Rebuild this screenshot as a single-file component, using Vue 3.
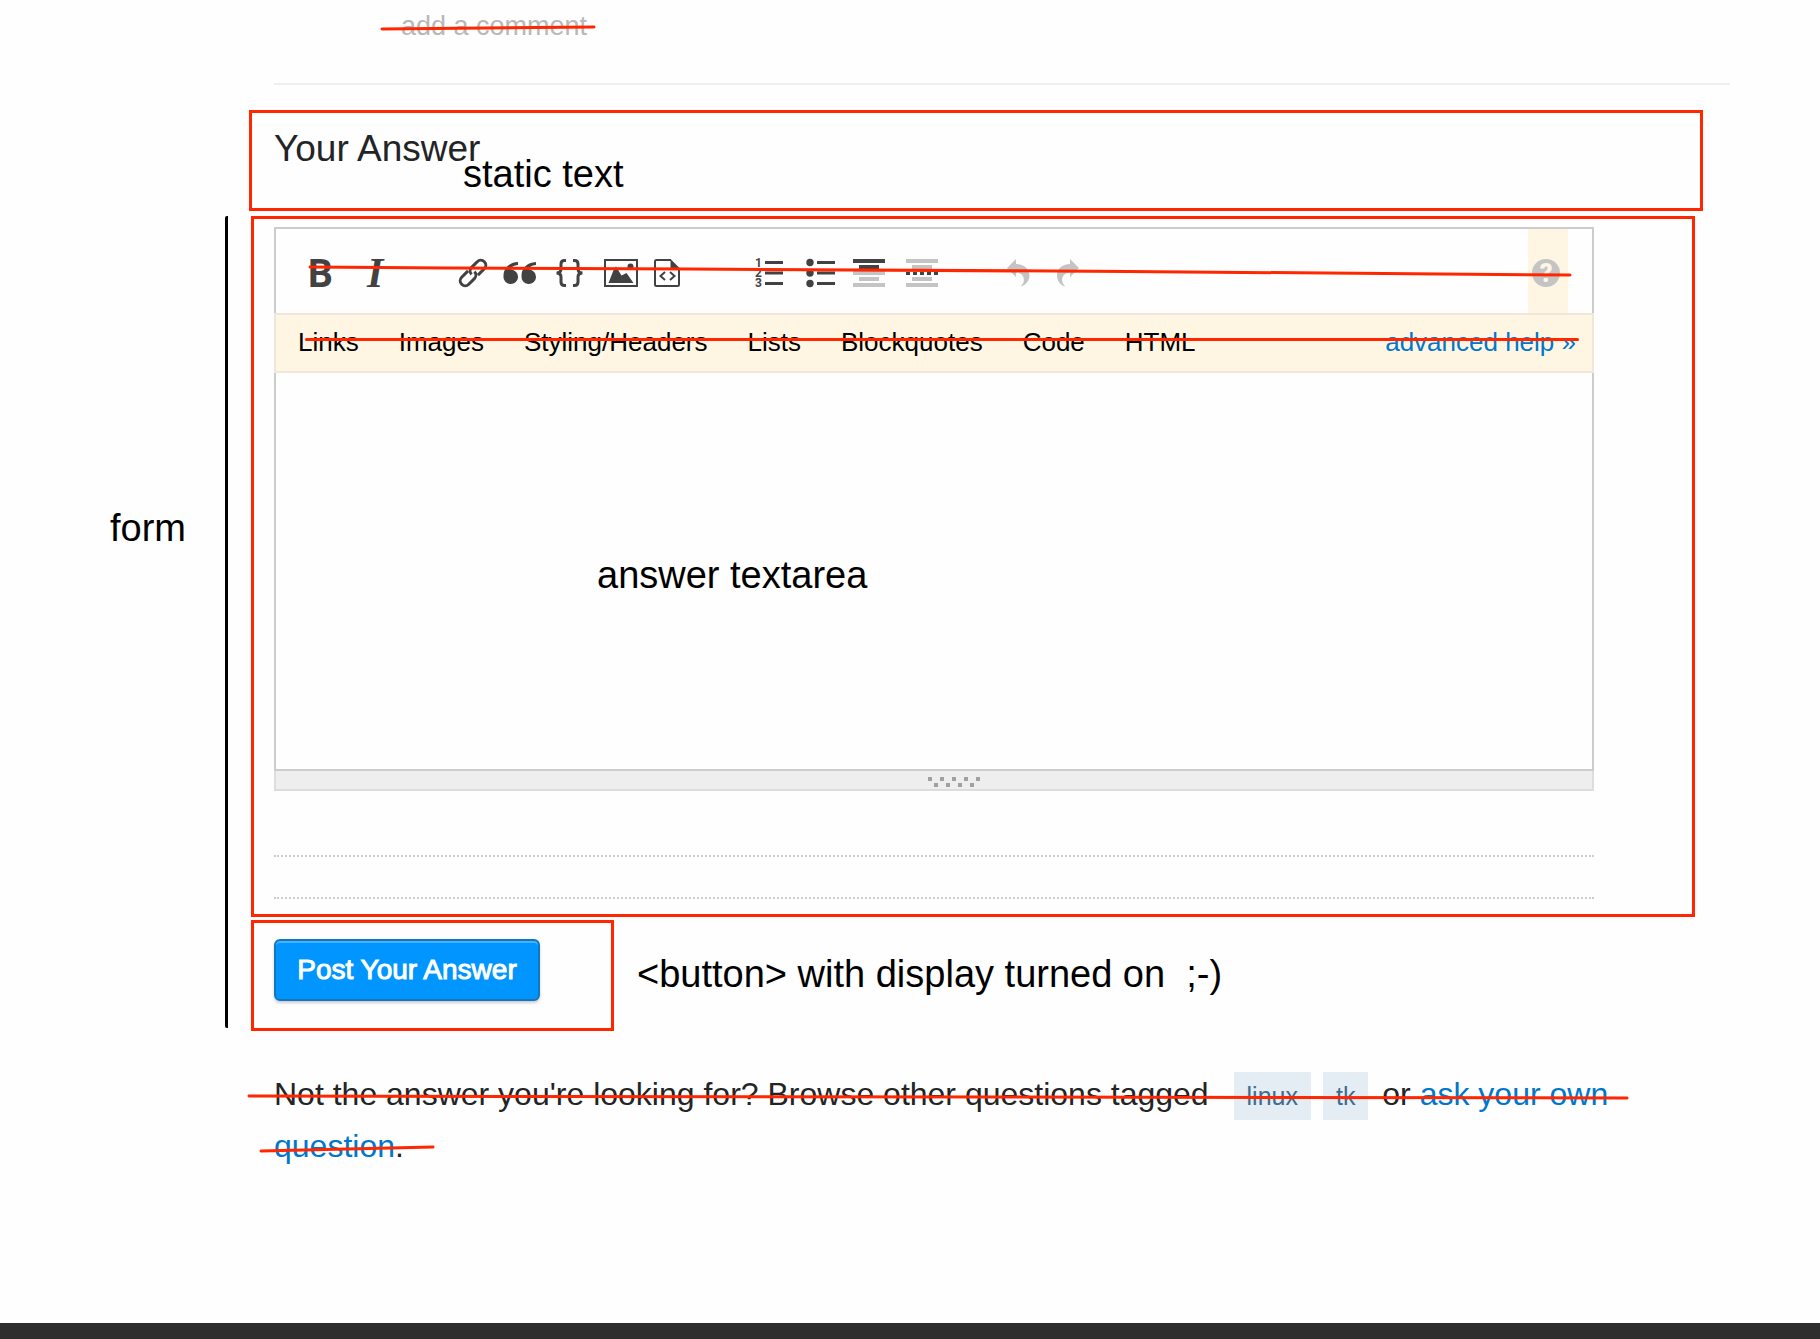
<script setup>
import { ref } from 'vue'

const answer = ref('')
const helpTopics = ['Links', 'Images', 'Styling/Headers', 'Lists', 'Blockquotes', 'Code', 'HTML']
const tags = ['linux', 'tk']
const grip = [0, 1, 2, 3, 4, 5, 6, 7, 8]
</script>

<template>
  <div class="page">
    <main>
      <div class="comment-row">
        <a href="#" class="add-comment">add a comment</a>
        <svg class="mark mark-comment" viewBox="0 0 216 8" preserveAspectRatio="none" aria-hidden="true">
          <path d="M2 5L214 3" />
        </svg>
      </div>

      <section class="heading-box">
        <h2>Your Answer</h2>
        <span class="note note-static">static text</span>
      </section>

      <div class="form-row">
        <div class="form-label note">form</div>
        <form @submit.prevent>
          <div class="editor-box">
            <div class="editor">
              <div class="toolbar">
                <button type="button" aria-label="Bold">
                  <svg viewBox="0 0 40 28"><text x="8" y="28" class="glyph-b">B</text></svg>
                </button>
                <button type="button" aria-label="Italic">
                  <svg viewBox="0 0 40 28"><text x="17" y="28" class="glyph-i">I</text></svg>
                </button>
                <span class="spacer"></span>
                <button type="button" aria-label="Link">
                  <svg viewBox="0 0 40 28">
                    <g transform="translate(23 14) rotate(-45)" class="line">
                      <path d="M-2 -5H-11a5 5 0 0 0 0 10H-3a5 5 0 0 0 5 -5" />
                      <path d="M2 5H11a5 5 0 0 0 0 -10H3a5 5 0 0 0 -5 5" />
                    </g>
                  </svg>
                </button>
                <button type="button" aria-label="Blockquote">
                  <svg viewBox="0 0 40 28">
                    <path d="M3.500 17C3.500 9 9 3.500 18 3V6C13.500 6.500 11.500 8 11 10.500A7.300 7.300 0 1 1 3.500 17Z" />
                    <path d="M21.500 17C21.500 9 27 3.500 36 3V6C31.500 6.500 29.500 8 29 10.500A7.300 7.300 0 1 1 21.500 17Z" />
                  </svg>
                </button>
                <button type="button" aria-label="Code">
                  <svg viewBox="0 0 40 28">
                    <path class="line" d="M16 1.500h-1.500c-2.500 0-3.500 1.200-3.500 3.500v5c0 2.500-1 4-4.500 4 3.500 0 4.500 1.500 4.500 4v5c0 2.300 1 3.500 3.500 3.500H16M23 1.500h1.500c2.500 0 3.500 1.200 3.500 3.500v5c0 2.500 1 4 4.500 4-3.500 0-4.500 1.500-4.500 4v5c0 2.300-1 3.500-3.500 3.500H23" />
                  </svg>
                </button>
                <button type="button" aria-label="Image">
                  <svg viewBox="0 0 40 28">
                    <rect class="thin" x="5" y="1" width="32" height="26" />
                    <path d="M8.500 24L14 10L16 7.500L21.500 16.500L26.500 14L33.500 24Z" />
                    <circle cx="30.500" cy="7.500" r="3" />
                  </svg>
                </button>
                <button type="button" aria-label="Snippet">
                  <svg viewBox="0 0 40 28">
                    <path class="thin" d="M21 1H6.500Q5 1 5 2.500V25.500Q5 27 6.500 27H27.500Q29 27 29 25.500V9" />
                    <path d="M20.500 0L30 9.500H20.500Z" />
                    <path class="thin" d="M15 13L10.500 17L15 21M20 13L24.500 17L20 21" />
                  </svg>
                </button>
                <span class="spacer"></span>
                <button type="button" aria-label="Numbered list">
                  <svg viewBox="0 0 40 28">
                    <text x="5" y="8" class="digit">1</text>
                    <text x="5" y="18" class="digit">2</text>
                    <text x="5" y="28" class="digit">3</text>
                    <path d="M15 2h18v3H15zM15 12.500h18v3H15zM15 23h18v3H15z" />
                  </svg>
                </button>
                <button type="button" aria-label="Bulleted list">
                  <svg viewBox="0 0 40 28">
                    <circle cx="10" cy="3.500" r="3.700" />
                    <circle cx="10" cy="14" r="3.700" />
                    <circle cx="10" cy="24.500" r="3.700" />
                    <path d="M17 2h18v3H17zM17 12.500h18v3H17zM17 23h18v3H17z" />
                  </svg>
                </button>
                <button type="button" aria-label="Heading">
                  <svg viewBox="0 0 40 28">
                    <path d="M3 0h32v4H3zM9 6h20v4H9z" />
                    <path class="pale" d="M3 12h32v4H3zM9 18h20v4H9zM3 24h32v4H3z" />
                  </svg>
                </button>
                <button type="button" aria-label="Horizontal rule">
                  <svg viewBox="0 0 40 28">
                    <path class="pale" d="M6 0h32v4H6zM12 6h20v4H12zM12 18h20v4H12zM6 24h32v4H6z" />
                    <path d="M6 13h4v3H6zM13 13h4v3h-4zM20 13h4v3h-4zM27 13h4v3h-4zM34 13h4v3h-4z" />
                  </svg>
                </button>
                <span class="spacer"></span>
                <button type="button" aria-label="Undo">
                  <svg viewBox="0 0 40 28">
                    <path class="pale" d="M7 9L16 0V5C24 5 29.500 10 29.500 16.500C29.500 21 26 26.500 20.500 27.500C26 23 25 14 16 13.500V18Z" />
                  </svg>
                </button>
                <button type="button" aria-label="Redo">
                  <svg viewBox="0 0 40 28">
                    <path class="pale" d="M29 9L20 0V5C12 5 7 10 7 16.500C7 21 10 26.500 15.500 27.500C10 23 11 14 20 13.500V18Z" />
                  </svg>
                </button>
                <button type="button" class="help-toggle" aria-label="Help">
                  <svg viewBox="0 0 40 28">
                    <circle class="pale" cx="18" cy="14" r="14" />
                    <text x="18" y="23" class="question">?</text>
                  </svg>
                </button>
                <svg class="mark mark-toolbar" viewBox="0 0 1264 12" preserveAspectRatio="none" aria-hidden="true">
                  <path d="M2 2L140 3L380 4L820 6.500L1262 10" />
                </svg>
              </div>

              <nav class="help-bar">
                <a v-for="topic in helpTopics" :key="topic" href="#">{{ topic }}</a>
                <a href="#" class="advanced">advanced help »</a>
                <span class="help-strike"></span>
              </nav>

              <div class="answer">
                <textarea id="answer" v-model="answer"></textarea>
                <label for="answer" class="note note-answer">answer textarea</label>
              </div>

              <div class="grippie">
                <i v-for="n in grip" :key="n" :class="{ low: n % 2 === 1 }"></i>
              </div>
            </div>
            <div class="dots first"></div>
            <div class="dots"></div>
          </div>

          <div class="submit-row">
            <div class="submit-box">
              <button type="submit" class="post">Post Your Answer</button>
            </div>
            <span class="note note-button">&lt;button&gt; with display turned on&nbsp; ;-)</span>
          </div>
        </form>
      </div>

      <p class="browse">
        Not the answer you're looking for? Browse other questions tagged
        <span class="tags"><a v-for="tag in tags" :key="tag" href="#" class="tag">{{ tag }}</a></span>
        or <a href="#">ask your own question</a>.
        <svg class="mark mark-browse" viewBox="0 0 1382 6" preserveAspectRatio="none" aria-hidden="true">
          <path d="M2 2L1380 4" />
        </svg>
        <svg class="mark mark-question" viewBox="0 0 176 8" preserveAspectRatio="none" aria-hidden="true">
          <path d="M2 6L174 2" />
        </svg>
      </p>
    </main>
    <footer></footer>
  </div>
</template>

<style>
body {
  margin: 0;
  background: #fefefe;
}
</style>

<style scoped>
.page {
  font-family: "Liberation Sans", Arial, Helvetica, sans-serif;
  font-size: 26px;
  color: #222426;
  overflow: hidden;
}
a {
  color: #0077cc;
  text-decoration: none;
}
.mark {
  position: absolute;
  overflow: visible;
  fill: none;
  stroke: #ff2600;
  stroke-width: 3px;
  stroke-linecap: round;
  pointer-events: none;
}
.mark path {
  vector-effect: non-scaling-stroke;
}
.note {
  font-size: 38px;
  line-height: 44px;
  color: #000;
  white-space: pre;
}

.comment-row {
  position: relative;
  box-sizing: border-box;
  height: 85px;
  margin: 0 90px 0 274px;
  padding: 11px 0 0 127px;
  border-bottom: 2px solid #eee;
  line-height: 30px;
}
.add-comment {
  color: #b8b8b8;
  font-size: 27px;
}
.mark-comment {
  left: 106px;
  top: 24px;
  width: 216px;
  height: 8px;
}

.heading-box {
  position: relative;
  box-sizing: border-box;
  min-height: 101px;
  margin: 25px 117px 0 249px;
  padding: 16px 22px;
  border: 3px solid #ff2600;
}
h2 {
  margin: 0;
  font-size: 37px;
  line-height: 40px;
  font-weight: 400;
}
.note-static {
  position: absolute;
  left: 211px;
  top: 39px;
}

.form-row {
  display: flex;
  margin-top: 5px;
}
.form-label {
  box-sizing: border-box;
  flex: none;
  width: 225px;
  padding: 290px 0 0 110px;
}
form {
  flex: 1;
  min-width: 0;
  padding: 0 125px 0 23px;
  border-left: 3px solid #000;
  border-radius: 2px;
}
.editor-box {
  padding: 8px 98px 15px 20px;
  border: 3px solid #ff2600;
}
.toolbar {
  position: relative;
  display: flex;
  gap: 10px;
  height: 84px;
  padding: 0 24px;
  border: 2px solid #ccc;
  border-bottom: 0;
}
.toolbar button,
.spacer {
  flex: none;
  width: 40px;
}
.toolbar button {
  display: flex;
  align-items: center;
  padding: 0;
  border: 0;
  background: none;
}
.toolbar button svg {
  width: 40px;
  height: 28px;
  margin-top: 4px;
  fill: #424242;
  overflow: visible;
}
.toolbar .help-toggle {
  margin-left: auto;
  background: #fff5e3;
}
svg .pale {
  fill: #c4c4c4;
}
svg .line {
  fill: none;
  stroke: #424242;
  stroke-width: 3px;
}
svg .thin {
  fill: none;
  stroke: #424242;
  stroke-width: 2px;
}
.glyph-b {
  font: 700 39px Roboto, sans-serif;
}
.glyph-i {
  font: italic 700 42px "Liberation Serif", serif;
}
.digit {
  font: 700 12px Roboto, sans-serif;
}
.question {
  font: 900 25px Roboto, sans-serif;
  fill: #fff5e3;
  text-anchor: middle;
}
.mark-toolbar {
  left: 32px;
  top: 36px;
  width: calc(100% - 52px);
  height: 12px;
}

.help-bar {
  position: relative;
  display: flex;
  gap: 40px;
  padding: 0 16px 2px 22px;
  border: 2px solid #f0e7d8;
  background: #fff5e3;
  line-height: 54px;
}
.help-bar a {
  color: #000;
}
.help-bar .advanced {
  margin-left: auto;
  color: #0077cc;
}
.help-strike {
  position: absolute;
  left: 29px;
  right: 13px;
  top: 23px;
  height: 3px;
  border-radius: 2px;
  background: #ff2600;
}

.answer {
  position: relative;
}
textarea {
  display: block;
  box-sizing: border-box;
  width: 100%;
  height: 398px;
  padding: 20px;
  border: 2px solid #ccc;
  border-top: 0;
  background: transparent;
  font: inherit;
  resize: none;
  outline: none;
}
.note-answer {
  position: absolute;
  left: 323px;
  top: 180px;
}
.grippie {
  display: flex;
  justify-content: center;
  gap: 2px;
  height: 12px;
  padding: 6px 0 0 40px;
  border: 2px solid #ddd;
  border-top: 0;
  background: #eee;
}
.grippie i {
  width: 4px;
  height: 4px;
  background: #a0a0a0;
}
.grippie .low {
  margin-top: 6px;
}
.dots {
  margin-top: 40px;
  border-top: 2px dotted #ccc;
}
.dots.first {
  margin-top: 64px;
}

.submit-row {
  display: flex;
  margin: 3px 0 -3px;
}
.submit-box {
  box-sizing: border-box;
  width: 363px;
  height: 111px;
  padding: 16px 20px;
  border: 3px solid #ff2600;
}
.post {
  width: 266px;
  height: 62px;
  padding: 0;
  border: 2px solid #1277bd;
  border-radius: 6px;
  background: #0095ff;
  box-shadow: inset 0 2px 0 #45b2ff, 0 2px 3px rgba(0, 0, 0, 0.2);
  color: #fff;
  font: 28px "Liberation Sans", Arial, sans-serif;
  -webkit-text-stroke: 1px #fff;
}
.note-button {
  margin: 32px 0 0 23px;
}

.browse {
  position: relative;
  margin: 40px 125px 0 274px;
  font-size: 32px;
  line-height: 52px;
}
.tags {
  display: inline-flex;
  gap: 12px;
  margin: 0 5px 0 16px;
}
.tag {
  padding: 0 13px;
  background: #e4ecf4;
  color: #3e6d8e;
  font-size: 25px;
  line-height: 48px;
}
.mark-browse {
  left: -27px;
  top: 26px;
  width: calc(100% - 39px);
  height: 6px;
}
.mark-question {
  left: -15px;
  top: 77px;
  width: 176px;
  height: 8px;
}
footer {
  height: 16px;
  margin-top: 151px;
  background: #2e2e2e;
}
</style>
